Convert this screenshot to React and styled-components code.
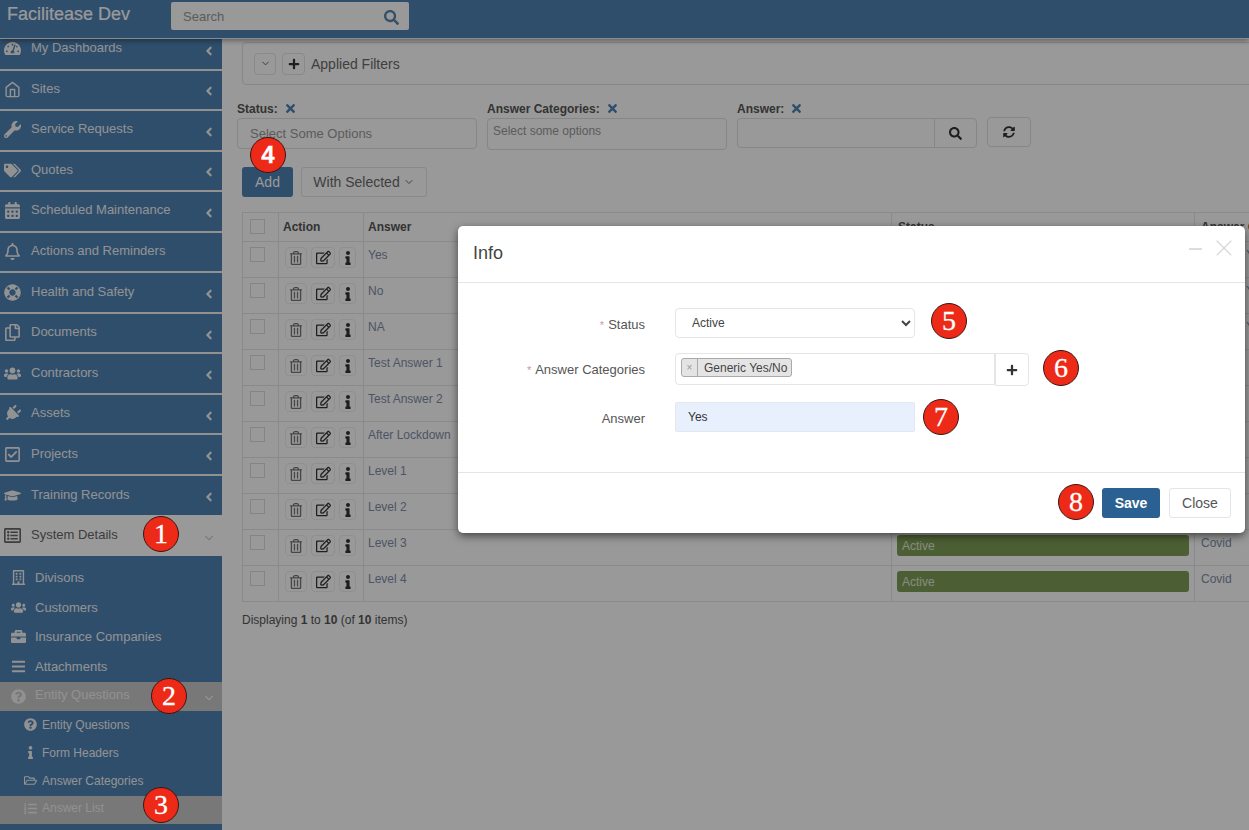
import React from "react";
import styled, { createGlobalStyle } from "styled-components";
import {
  FaTachometerAlt, FaWrench, FaTags, FaCalendarAlt, FaRegBell, FaLifeRing, FaRegCopy, FaUsers, FaPlug,
  FaRegCheckSquare, FaGraduationCap, FaRegListAlt, FaRegBuilding, FaBriefcase, FaBars, FaQuestionCircle,
  FaInfo, FaRegFolderOpen, FaListOl, FaAngleLeft, FaSearch, FaPlus, FaTimes, FaSyncAlt,
  FaRegTrashAlt, FaRegEdit,
} from "react-icons/fa";
import { FiHome, FiChevronDown, FiX } from "react-icons/fi";

const Global = createGlobalStyle`
  html, body { margin: 0; padding: 0; background: #fff; }
  body { font-family: "Liberation Sans", Arial, sans-serif; color: #555; overflow: hidden; }
  * { box-sizing: border-box; }
`;

const Page = styled.div`
  position: relative;
  width: 1249px;
  height: 830px;
  overflow: hidden;
  display: flex;
  flex-direction: column;
`;
const Header = styled.header`
  height: 39px;
  flex: none;
  background: #4d82b4;
  border-bottom: 1px solid #e8e8e8;
  box-shadow: 0 2px 5px rgba(0, 0, 0, 0.35);
  display: flex;
  align-items: flex-start;
  position: relative;
  z-index: 2;
`;
const Brand = styled.div`
  width: 171px;
  padding: 4px 0 0 7px;
  font-size: 18px;
  font-weight: 400;
  color: #fff;
  -webkit-text-stroke: 0.2px #fff;
`;
const SearchBox = styled.div`
  margin-top: 2px;
  width: 238px;
  height: 28px;
  background: #fff;
  border-radius: 2px;
  display: flex;
  align-items: center;
  justify-content: space-between;
  padding: 0 10px 0 12px;
  font-size: 13px;
  color: #999;
  svg { font-size: 15px; color: #5a85ad; margin-top: 2px; }
`;
const Body = styled.div`
  flex: 1;
  display: flex;
  min-height: 0;
`;
const Sidebar = styled.nav`
  width: 222px;
  flex: none;
  background: #4d82b4;
  overflow: hidden;
  color: #fff;
`;
const TopList = styled.div`
  margin-top: -9px;
`;
const TopItem = styled.div`
  height: 40.55px;
  border-bottom: 2px solid #f2f2f2;
  display: flex;
  align-items: center;
  padding-left: 3px;
  font-size: 13px;
  position: relative;
  color: #f4f4f4;
  ${(p) => p.$active && `background:#fff;color:#666;border-bottom:0;height:41px;padding-top:1px;`}
  ${(p) => p.$last && `border-bottom:0;height:39px;`}
`;
const TopIcon = styled.span`
  width: 18px;
  margin-right: 10px;
  display: inline-flex;
  justify-content: center;
  font-size: 17px;
  flex: none;
  margin-top: -1px;
  svg { transform: ${(p) => (p.$rotate ? "rotate(45deg)" : "none")}; }
`;
const TopLabel = styled.span`
  flex: 1;
  margin-top: -3px;
`;
const Chevron = styled.span`
  width: 18px;
  margin-right: 4px;
  display: inline-flex;
  font-size: 14px;
  margin-top: 3px;
  justify-content: center;
  opacity: ${(p) => (p.$faint ? 0.3 : 1)};
`;
const SubList = styled.div`
  padding-top: 6px;
`;
const SubItem = styled.div`
  height: 29.7px;
  padding-top: 1px;
  display: flex;
  align-items: center;
  padding-left: 9px;
  font-size: 13px;
  color: #f4f4f4;
  ${(p) => p.$active && `background:#c8c8c8;color:#f2f2f2;height:29px;padding-top:0;margin-top:1px;`}
`;
const SubIcon = styled.span`
  width: 18px;
  margin-right: 8px;
  display: inline-flex;
  justify-content: center;
  font-size: 15px;
`;
const SubSubItem = styled.div`
  height: 28px;
  display: flex;
  align-items: center;
  padding-left: 22px;
  font-size: 12px;
  color: #f4f4f4;
  ${(p) => p.$active && `background:#c8c8c8;color:#f2f2f2;margin-top:1px;padding-bottom:3px;`}
`;
const SubSubIcon = styled.span`
  width: 16px;
  margin-right: 4px;
  display: inline-flex;
  justify-content: center;
  font-size: 13px;
`;
const Main = styled.main`
  flex: 1;
  min-width: 0;
  padding: 3px 0 0 20px;
  overflow: hidden;
  background: #fff;
`;
const FilterPanel = styled.div`
  height: 43px;
  width: 1100px;
  border: 1px solid #e2e2e2;
  border-radius: 4px;
  display: flex;
  align-items: center;
  padding: 0 0 0 11px;
  font-size: 14px;
  color: #6a6a6a;
`;
const SquareBtn = styled.span`
  height: 22px;
  width: ${(p) => p.$w}px;
  margin-right: ${(p) => p.$mr}px;
  border: 1px solid #e4e4e4;
  border-radius: 4px;
  display: inline-flex;
  align-items: center;
  justify-content: center;
  color: ${(p) => p.$c || "#333"};
  font-size: ${(p) => p.$s || 12}px;
`;
const FilterRow = styled.div`
  display: flex;
  gap: 10px;
  margin: 15px 0 0 -5px;
`;
const FilterCol = styled.div`
  width: 240px;
  flex: none;
`;
const FilterLabel = styled.label`
  display: flex;
  align-items: center;
  gap: 6px;
  height: 17px;
  font-size: 12px;
  font-weight: 700;
  color: #555;
  svg { color: #4d82b4; font-size: 13px; }
`;
const FilterInput = styled.div`
  height: ${(p) => p.$h}px;
  margin-top: 1px;
  border: 1px solid #e0e0e0;
  border-radius: 4px;
  display: flex;
  align-items: ${(p) => (p.$top ? "flex-start" : "center")};
  padding: ${(p) => (p.$top ? "5px 5px" : "0 12px")};
  font-size: ${(p) => (p.$top ? 12 : 13)}px;
  color: #999;
`;
const AnswerGroup = styled.div`
  height: 30px;
  margin-top: 1px;
  border: 1px solid #e0e0e0;
  border-radius: 4px;
  display: flex;
  justify-content: flex-end;
`;
const AnswerBtn = styled.span`
  width: 42px;
  border-left: 1px solid #e0e0e0;
  display: flex;
  align-items: center;
  justify-content: center;
  color: #333;
  font-size: 13px;
`;
const RefreshBtn = styled.span`
  width: 44px;
  height: 30px;
  margin-top: 17px;
  border: 1px solid #e0e0e0;
  border-radius: 4px;
  display: flex;
  align-items: center;
  justify-content: center;
  color: #333;
  font-size: 12px;
`;
const Toolbar = styled.div`
  display: flex;
  gap: 8px;
  margin-top: 17px;
`;
const AddBtn = styled.span`
  width: 51px;
  height: 30px;
  background: #4d82b4;
  color: #fff;
  border-radius: 3px;
  display: flex;
  align-items: center;
  justify-content: center;
  font-size: 14px;
`;
const SelectedBtn = styled.span`
  width: 126px;
  height: 30px;
  border: 1px solid #e4e4e4;
  border-radius: 3px;
  display: flex;
  align-items: center;
  justify-content: center;
  gap: 3px;
  font-size: 14px;
  color: #6a6a6a;
  svg { font-size: 12px; }
`;
const Table = styled.table`
  border-collapse: collapse;
  table-layout: fixed;
  width: 1152px;
  margin-top: 15px;
  font-size: 12px;
  th, td { border: 1px solid #e6e6e6; padding: 0; vertical-align: top; text-align: left; }
  th { height: 29px; padding: 7px 4px 0; font-weight: 700; color: #555; }
  td { height: 36px; padding: 6px 4px 0; color: #7f8ea8; }
  th:nth-child(n + 4), td:nth-child(5) { padding-left: 6px; }
`;
const Check = styled.span`
  display: block;
  width: 15px;
  height: 15px;
  margin: -1px 0 0 3px;
  border: 1px solid #dcdcdc;
`;
const Actions = styled.div`
  display: flex;
  gap: 4px;
  margin: -1px 0 0 2px;
`;
const ActionBtn = styled.span`
  width: ${(p) => p.$w}px;
  height: 21px;
  border: 1px solid #efefef;
  border-radius: 4px;
  display: flex;
  align-items: center;
  justify-content: center;
  color: ${(p) => p.$c || "#333"};
  font-size: ${(p) => p.$s}px;
`;
const StatusBar = styled.div`
  height: 21px;
  background: #7f9f58;
  color: #e0e8d6;
  border-radius: 3px;
  padding: 4px 5px;
  margin: -1px 1px 0;
`;
const Count = styled.div`
  margin-top: 11px;
  font-size: 12px;
  color: #555;
`;
const Backdrop = styled.div`
  position: absolute;
  inset: 0;
  background: rgba(0, 0, 0, 0.4);
  z-index: 10;
`;
const Modal = styled.section`
  position: absolute;
  left: 458px;
  top: 226px;
  width: 787px;
  height: 307px;
  background: #fff;
  border-radius: 5px;
  box-shadow: 0 3px 9px rgba(0, 0, 0, 0.55);
  z-index: 20;
  display: flex;
  flex-direction: column;
`;
const ModalHead = styled.div`
  height: 57px;
  flex: none;
  border-bottom: 1px solid #e5e5e5;
  display: flex;
  justify-content: space-between;
  padding: 17px 7px 0 15px;
  font-size: 18px;
  color: #444;
`;
const HeadTools = styled.div`
  display: flex;
  gap: 8px;
  height: 14px;
  margin-top: -9px;
  color: #d8d8d8;
`;
const Dash = styled.span`
  width: 13px;
  height: 1.5px;
  margin-top: 14px;
  background: #ddd;
`;
const ModalBody = styled.div`
  flex: 1;
  padding-top: 25px;
  display: flex;
  flex-direction: column;
  font-size: 12px;
`;
const FormRow = styled.div`
  display: grid;
  grid-template-columns: 187px auto;
  column-gap: 30px;
  justify-content: start;
  margin-bottom: ${(p) => p.$mb}px;
`;
const FormLabel = styled.label`
  text-align: right;
  padding-top: ${(p) => p.$pt}px;
  color: #555;
  font-size: 13px;
  span { color: #c99; margin-right: 4px; font-size: 11px; }
`;
const NativeSelect = styled.select`
  width: 240px;
  height: 30px;
  padding: 0 12px;
  background: #fff;
  border: 1px solid #e5e5e5;
  border-radius: 4px;
  font: 12px "Liberation Sans", Arial, sans-serif;
  color: #444;
`;
const TagGroup = styled.div`
  display: flex;
  align-items: flex-start;
`;
const TagBox = styled.div`
  width: 320px;
  height: 32px;
  border: 1px solid #e5e5e5;
  border-radius: 4px 0 0 4px;
  padding: 4px 5px;
`;
const Tag = styled.span`
  display: inline-flex;
  height: 19px;
  background: #e4e4e4;
  border: 1px solid #aaa;
  border-radius: 3px;
  align-items: center;
  color: #444;
  font-size: 12px;
  i {
    width: 16px;
    height: 100%;
    border-right: 1px solid #aaa;
    margin-right: 6px;
    display: flex;
    align-items: center;
    justify-content: center;
    font-style: normal;
    font-size: 10px;
    color: #999;
  }
  b { font-weight: 400; padding-right: 4px; }
`;
const TagAdd = styled.span`
  width: 34px;
  height: 33px;
  border: 1px solid #e5e5e5;
  border-radius: 0 4px 4px 0;
  display: flex;
  align-items: center;
  justify-content: center;
  color: #333;
  font-size: 12px;
`;
const TextField = styled.input`
  width: 240px;
  height: 30px;
  padding: 0 12px;
  background: #e8f0fe;
  border: 1px solid #e3e8f0;
  border-radius: 2px;
  font: 12px "Liberation Sans", Arial, sans-serif;
  color: #333;
`;
const ModalFoot = styled.div`
  height: 61px;
  flex: none;
  border-top: 1px solid #e5e5e5;
  display: flex;
  justify-content: flex-end;
  gap: 9px;
  padding: 15px 14px 0 0;
`;
const SaveBtn = styled.button`
  width: 58px;
  height: 30px;
  background: #2b6192;
  color: #fff;
  border: 0;
  border-radius: 3px;
  font: 700 14px "Liberation Sans", Arial, sans-serif;
`;
const CloseBtn = styled.button`
  width: 62px;
  height: 30px;
  background: #fff;
  color: #555;
  border: 1px solid #e5e5e5;
  border-radius: 3px;
  font: 14px "Liberation Sans", Arial, sans-serif;
`;
const Badge = styled.span`
  position: absolute;
  left: ${(p) => p.$x - 18}px;
  top: ${(p) => p.$y - 18}px;
  width: 36px;
  height: 36px;
  border-radius: 50%;
  background: #ec2a17;
  border: 1.5px solid #3d1512;
  z-index: 30;
  display: flex;
  align-items: center;
  justify-content: center;
  color: #fff;
  font-family: ${(p) => (p.$sans ? '"Liberation Sans", Arial' : '"Liberation Serif", "Times New Roman"')}, serif;
  font-weight: ${(p) => (p.$sans ? 700 : 400)};
  font-size: ${(p) => (p.$sans ? 24 : 28)}px;
  -webkit-text-stroke: 0.3px #fff;
  line-height: 1;
`;

const nav = [
  [FaTachometerAlt, "My Dashboards", true],
  [FiHome, "Sites", true],
  [FaWrench, "Service Requests", true],
  [FaTags, "Quotes", true],
  [FaCalendarAlt, "Scheduled Maintenance", true],
  [FaRegBell, "Actions and Reminders", false],
  [FaLifeRing, "Health and Safety", true],
  [FaRegCopy, "Documents", true],
  [FaUsers, "Contractors", true],
  [FaPlug, "Assets", true, true],
  [FaRegCheckSquare, "Projects", true],
  [FaGraduationCap, "Training Records", true],
];
const rows = [
  ["Yes", "Generic Yes/No"],
  ["No", "Generic Yes/No"],
  ["NA", "Generic Yes/No"],
  ["Test Answer 1", "Test"],
  ["Test Answer 2", "Test"],
  ["After Lockdown", "Covid"],
  ["Level 1", "Covid"],
  ["Level 2", "Covid"],
  ["Level 3", "Covid"],
  ["Level 4", "Covid"],
];
const badges = [
  [1, 161, 534], [2, 169, 696], [3, 161, 805], [4, 268, 155, true],
  [5, 949, 321], [6, 1061, 368], [7, 941, 417], [8, 1076, 502],
];

export default function App() {
  return (
    <Page>
      <Global />
      <Header>
        <Brand>Facilitease Dev</Brand>
        <SearchBox>Search<FaSearch /></SearchBox>
      </Header>
      <Body>
        <Sidebar>
          <TopList>
            {nav.map(([Icon, label, chev, rot], i) => (
              <TopItem key={label} $last={i === nav.length - 1}>
                <TopIcon $rotate={rot}><Icon /></TopIcon>
                <TopLabel>{label}</TopLabel>
                {chev && <Chevron><FaAngleLeft /></Chevron>}
              </TopItem>
            ))}
            <TopItem $active>
              <TopIcon><FaRegListAlt /></TopIcon>
              <TopLabel>System Details</TopLabel>
              <Chevron $faint><FiChevronDown /></Chevron>
            </TopItem>
          </TopList>
          <SubList>
            <SubItem><SubIcon><FaRegBuilding /></SubIcon>Divisons</SubItem>
            <SubItem><SubIcon><FaUsers /></SubIcon>Customers</SubItem>
            <SubItem><SubIcon><FaBriefcase /></SubIcon>Insurance Companies</SubItem>
            <SubItem><SubIcon><FaBars /></SubIcon>Attachments</SubItem>
            <SubItem $active>
              <SubIcon><FaQuestionCircle /></SubIcon>
              <TopLabel>Entity Questions</TopLabel>
              <Chevron><FiChevronDown /></Chevron>
            </SubItem>
            <SubSubItem><SubSubIcon><FaQuestionCircle /></SubSubIcon>Entity Questions</SubSubItem>
            <SubSubItem><SubSubIcon><FaInfo /></SubSubIcon>Form Headers</SubSubItem>
            <SubSubItem><SubSubIcon><FaRegFolderOpen /></SubSubIcon>Answer Categories</SubSubItem>
            <SubSubItem $active><SubSubIcon><FaListOl /></SubSubIcon>Answer List</SubSubItem>
          </SubList>
        </Sidebar>
        <Main>
          <FilterPanel>
            <SquareBtn $w={22} $mr={6} $c="#555" $s={11}><FiChevronDown /></SquareBtn>
            <SquareBtn $w={23} $mr={6}><FaPlus /></SquareBtn>
            Applied Filters
          </FilterPanel>
          <FilterRow>
            <FilterCol>
              <FilterLabel>Status: <FaTimes /></FilterLabel>
              <FilterInput $h={31}>Select Some Options</FilterInput>
            </FilterCol>
            <FilterCol>
              <FilterLabel>Answer Categories: <FaTimes /></FilterLabel>
              <FilterInput $h={32} $top>Select some options</FilterInput>
            </FilterCol>
            <FilterCol>
              <FilterLabel>Answer: <FaTimes /></FilterLabel>
              <AnswerGroup><AnswerBtn><FaSearch /></AnswerBtn></AnswerGroup>
            </FilterCol>
            <RefreshBtn><FaSyncAlt /></RefreshBtn>
          </FilterRow>
          <Toolbar>
            <AddBtn>Add</AddBtn>
            <SelectedBtn>With Selected <FiChevronDown /></SelectedBtn>
          </Toolbar>
          <Table>
            <colgroup>
              <col width="36" /><col width="85" /><col width="528" /><col width="303" /><col width="200" />
            </colgroup>
            <thead>
              <tr>
                <th><Check /></th>
                <th>Action</th>
                <th>Answer</th>
                <th>Status</th>
                <th>Answer Categories</th>
              </tr>
            </thead>
            <tbody>
              {rows.map(([answer, cat]) => (
                <tr key={answer}>
                  <td><Check /></td>
                  <td>
                    <Actions>
                      <ActionBtn $w={22} $s={14} $c="#777"><FaRegTrashAlt /></ActionBtn>
                      <ActionBtn $w={24} $s={15}><FaRegEdit /></ActionBtn>
                      <ActionBtn $w={17} $s={14}><FaInfo /></ActionBtn>
                    </Actions>
                  </td>
                  <td>{answer}</td>
                  <td><StatusBar>Active</StatusBar></td>
                  <td>{cat}</td>
                </tr>
              ))}
            </tbody>
          </Table>
          <Count>Displaying <b>1</b> to <b>10</b> (of <b>10</b> items)</Count>
        </Main>
      </Body>
      <Backdrop />
      <Modal>
        <ModalHead>
          Info
          <HeadTools><Dash /><FiX size={28} strokeWidth={1} /></HeadTools>
        </ModalHead>
        <ModalBody>
          <FormRow $mb={15}>
            <FormLabel $pt={9}><span>*</span>Status</FormLabel>
            <NativeSelect defaultValue="Active"><option>Active</option><option>Inactive</option></NativeSelect>
          </FormRow>
          <FormRow $mb={16}>
            <FormLabel $pt={9}><span>*</span>Answer Categories</FormLabel>
            <TagGroup>
              <TagBox><Tag><i>×</i><b>Generic Yes/No</b></Tag></TagBox>
              <TagAdd><FaPlus /></TagAdd>
            </TagGroup>
          </FormRow>
          <FormRow $mb={0}>
            <FormLabel $pt={9}>Answer</FormLabel>
            <TextField defaultValue="Yes" />
          </FormRow>
        </ModalBody>
        <ModalFoot>
          <SaveBtn>Save</SaveBtn>
          <CloseBtn>Close</CloseBtn>
        </ModalFoot>
      </Modal>
      {badges.map(([n, x, y, sans]) => (
        <Badge key={n} $x={x} $y={y} $sans={sans}>{n}</Badge>
      ))}
    </Page>
  );
}
